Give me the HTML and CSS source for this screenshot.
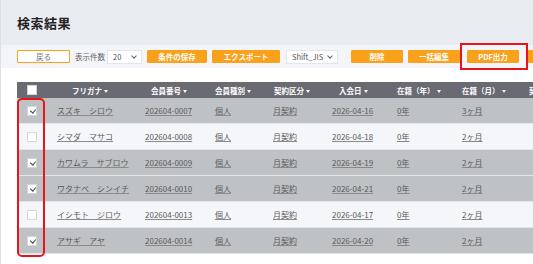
FILE: index.html
```html
<!DOCTYPE html>
<html>
	<head>
		<meta charset="utf-8" />
		<title>検索結果</title>
		<link rel="stylesheet" href="styles.css">
	</head>
	<body>
		<div class="page">
			<div class="head">
				<h1 class="title">検索結果</h1>
			</div>
			<div class="toolbar">
				<button class="btn btn-back">戻る</button>
				<span class="label">表示件数</span>
				<div class="select sel-count">20<span class="chev"></span></div>
				<button class="btn btn-save">条件の保存</button>
				<button class="btn btn-export">エクスポート</button>
				<div class="select sel-enc">Shift_JIS<span class="chev"></span></div>
				<button class="btn btn-del">削除</button>
				<button class="btn btn-bulk">一括編集</button>
				<button class="btn btn-pdf">PDF出力</button>
				<button class="btn btn-more">&nbsp;</button>
			</div>
			<div class="main">
				<div class="table-wrap">
					<table class="list">
						<colgroup>
							<col style="width:30px"><col style="width:90px"><col style="width:70px"><col style="width:58px"><col style="width:59px"><col style="width:65px"><col style="width:65px"><col style="width:67px"><col style="width:60px">
						</colgroup>
						<thead>
							<tr>
								<th><span class="cb"></span></th>
								<th>フリガナ<i class="arr"></i></th>
								<th>会員番号<i class="arr"></i></th>
								<th>会員種別<i class="arr"></i></th>
								<th>契約区分<i class="arr"></i></th>
								<th>入会日<i class="arr"></i></th>
								<th>在籍（年）<i class="arr"></i></th>
								<th>在籍（月）<i class="arr"></i></th>
								<th>契約</th>
							</tr>
						</thead>
						<tbody>
							<tr class="on">
								<td><span class="cb checked"></span></td>
								<td><a>スズキ　シロウ</a></td><td><a>202604-0007</a></td><td><a>個人</a></td><td><a>月契約</a></td><td><a>2026-04-16</a></td><td><a>0年</a></td><td><a>3ヶ月</a></td><td></td>
							</tr>
							<tr>
								<td><span class="cb"></span></td>
								<td><a>シマダ　マサコ</a></td><td><a>202604-0008</a></td><td><a>個人</a></td><td><a>月契約</a></td><td><a>2026-04-18</a></td><td><a>0年</a></td><td><a>2ヶ月</a></td><td></td>
							</tr>
							<tr class="on">
								<td><span class="cb checked"></span></td>
								<td><a>カワムラ　サブロウ</a></td><td><a>202604-0009</a></td><td><a>個人</a></td><td><a>月契約</a></td><td><a>2026-04-19</a></td><td><a>0年</a></td><td><a>2ヶ月</a></td><td></td>
							</tr>
							<tr class="on">
								<td><span class="cb checked"></span></td>
								<td><a>ワタナベ　シンイチ</a></td><td><a>202604-0010</a></td><td><a>個人</a></td><td><a>月契約</a></td><td><a>2026-04-21</a></td><td><a>0年</a></td><td><a>2ヶ月</a></td><td></td>
							</tr>
							<tr>
								<td><span class="cb"></span></td>
								<td><a>イシモト　ジロウ</a></td><td><a>202604-0013</a></td><td><a>個人</a></td><td><a>月契約</a></td><td><a>2026-04-17</a></td><td><a>0年</a></td><td><a>2ヶ月</a></td><td></td>
							</tr>
							<tr class="on">
								<td><span class="cb checked"></span></td>
								<td><a>アサギ　アヤ</a></td><td><a>202604-0014</a></td><td><a>個人</a></td><td><a>月契約</a></td><td><a>2026-04-20</a></td><td><a>0年</a></td><td><a>2ヶ月</a></td><td></td>
							</tr>
						</tbody>
					</table>
					<div class="mark"></div>
				</div>
			</div>
		</div>
	</body>
</html>
```

FILE: styles.css
```css
body {
	margin: 0;
	font-family: "Noto Sans CJK JP", "Noto Sans", sans-serif;
	background: #fff;
}
.page {
	width: 533px;
	height: 264px;
	overflow: hidden;
	border-left: 1px solid #dcdfe4;
	box-sizing: border-box;
}
.head {
	height: 45px;
	background: #e9ecf1;
	padding-left: 16px;
	display: flex;
	align-items: center;
}
.title {
	margin: 0;
	font-size: 13px;
	font-weight: 700;
	color: #222;
	letter-spacing: 0.5px;
}
.toolbar {
	height: 23px;
	background: #f3f5f8;
	padding-left: 16px;
	display: flex;
	align-items: center;
	white-space: nowrap;
}
.btn {
	height: 13px;
	padding: 0;
	border: 1px solid #f9a11b;
	background: #f9a11b;
	color: #fff;
	font-family: inherit;
	font-size: 7.5px;
	font-weight: 700;
	line-height: 11px;
	box-sizing: border-box;
	flex: none;
	border-radius: 1px;
}
.btn-back {
	width: 53px;
	background: #fff;
	color: #777;
	font-weight: 400;
}
.label {
	margin-left: 5px;
	font-size: 7.5px;
	color: #666;
}
.select {
	height: 14px;
	box-sizing: border-box;
	background: #fff;
	border: 1px solid #e2e5ea;
	font-size: 7.5px;
	color: #555;
	display: flex;
	align-items: center;
	padding-left: 5px;
	flex: none;
}
.chev {
	width: 3px;
	height: 3px;
	border-right: 1px solid #666;
	border-bottom: 1px solid #666;
	transform: rotate(45deg);
	margin-left: auto;
	margin-right: 5px;
	margin-top: -2px;
}
.sel-count { width: 35px; margin-left: 2px; }
.btn-save { width: 60px; margin-left: 5px; }
.btn-export { width: 68px; margin-left: 5px; }
.sel-enc { width: 52px; margin-left: 6px; }
.btn-del { width: 52px; margin-left: 13px; }
.btn-bulk { width: 52px; margin-left: 5px; }
.btn-pdf { width: 52px; margin-left: 7px; position: relative; }
.btn-pdf::after {
	content: "";
	position: absolute;
	left: -8px;
	right: -10px;
	top: -8px;
	bottom: -8px;
	border: 2px solid #e8141b;
}
.btn-more { width: 40px; margin-left: 8px; }

.main {
	padding: 14px 0 0 16px;
}
.table-wrap {
	position: relative;
}
.list {
	border-collapse: collapse;
	table-layout: fixed;
	width: 564px;
	font-size: 8px;
}
.list th {
	height: 16px;
	background: #696a72;
	color: #fff;
	font-weight: 700;
	font-size: 7.5px;
	text-align: left;
	padding: 0 0 0 8px;
	white-space: nowrap;
	overflow: hidden;
}
.list th:nth-child(1) { padding-left: 10px; }
.list th:nth-child(2) { padding-left: 25px; }
.list th:nth-child(3) { padding-left: 14px; }
.list th:nth-child(5) { padding-left: 9px; }
.list th:nth-child(6) { padding-left: 15px; }
.arr {
	display: inline-block;
	width: 0;
	height: 0;
	border-left: 2.5px solid transparent;
	border-right: 2.5px solid transparent;
	border-top: 3px solid #fff;
	margin-left: 2px;
	vertical-align: 1px;
}
.list td {
	height: 25px;
	padding: 0 0 0 8px;
	border-bottom: 1px solid #e4e6ea;
	white-space: nowrap;
	overflow: hidden;
}
.list td:nth-child(1) { padding-left: 10px; }
.list td:nth-child(2) { padding-left: 10px; }
.list tbody tr {
	background: #f5f6f9;
}
.list tbody tr.on {
	background: #bfc2c5;
}
.list a {
	color: #5a5a5a;
	text-decoration: underline;
	text-decoration-color: #8a8a8a;
}
.cb {
	display: block;
	width: 10px;
	height: 10px;
	box-sizing: border-box;
	background: #fff;
	border: 1px solid #d4d6da;
	position: relative;
}
.cb.checked::after {
	content: "";
	position: absolute;
	left: 2.5px;
	top: 1.5px;
	width: 3px;
	height: 4px;
	border-right: 1.5px solid #444;
	border-bottom: 1.5px solid #444;
	transform: rotate(40deg);
}
.mark {
	position: absolute;
	left: 0;
	top: 16px;
	width: 28px;
	height: 159px;
	box-sizing: border-box;
	border: 2px solid #e8141b;
	border-radius: 5px;
}
```
